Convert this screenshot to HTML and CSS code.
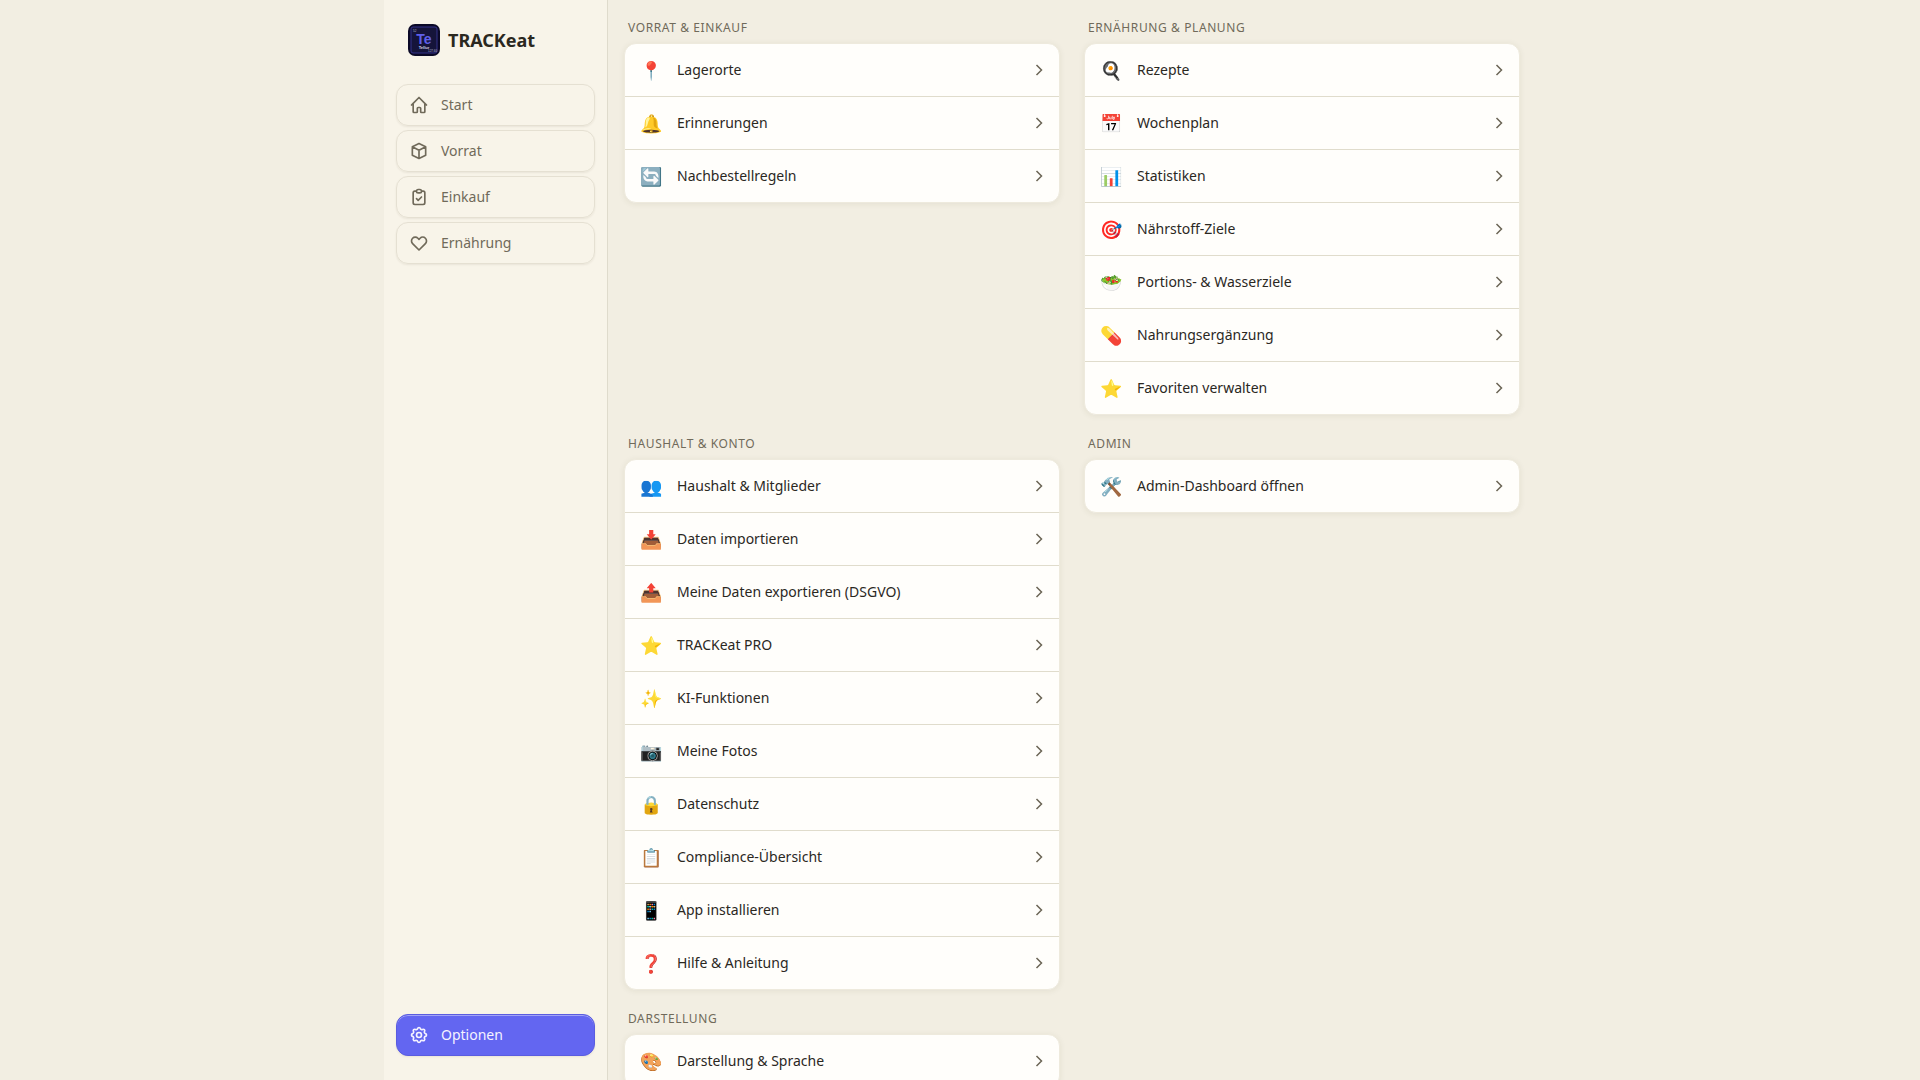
FILE: index.html
```
<!DOCTYPE html>
<html lang="de">
<head>
<meta charset="utf-8">
<meta name="viewport" content="width=device-width, initial-scale=1">
<title>TRACKeat – Optionen</title>
<link rel="stylesheet" href="styles.css">
</head>
<body>
<div class="app">
  <aside class="sidebar">
    <div class="brand">
      <svg class="brand-logo" viewBox="0 0 32 32" aria-hidden="true">
        <rect width="32" height="32" rx="7" fill="#0b0927"/>
        <rect x="3" y="3" width="26" height="26" rx="2" fill="#15143a" stroke="#35338a"/>
        <text x="5" y="8" class="logo-tiny">52</text>
        <text x="16" y="20" class="logo-symbol">Te</text>
        <text x="16" y="25" class="logo-name">Tellur</text>
        <text x="20" y="28" class="logo-tiny">127.60</text>
      </svg>
      <span class="brand-name">TRACKeat</span>
    </div>
    <nav class="nav" aria-label="Hauptnavigation">
      <a class="nav-item" href="#start"><svg class="nav-icon" viewBox="0 0 24 24"><path d="m3 12 2-2m0 0 7-7 7 7M5 10v10a1 1 0 0 0 1 1h3m10-11 2 2m-2-2v10a1 1 0 0 1-1 1h-3m-6 0a1 1 0 0 0 1-1v-4a1 1 0 0 1 1-1h2a1 1 0 0 1 1 1v4a1 1 0 0 0 1 1"/></svg>Start</a>
      <a class="nav-item" href="#vorrat"><svg class="nav-icon" viewBox="0 0 24 24"><path d="m20 7-8-4-8 4m16 0-8 4m8-4v10l-8 4m0-10L4 7m8 4v10M4 7v10l8 4"/></svg>Vorrat</a>
      <a class="nav-item" href="#einkauf"><svg class="nav-icon" viewBox="0 0 24 24"><path d="M9 5H7a2 2 0 0 0-2 2v12a2 2 0 0 0 2 2h10a2 2 0 0 0 2-2V7a2 2 0 0 0-2-2h-2M9 5a2 2 0 0 0 2 2h2a2 2 0 0 0 2-2M9 5a2 2 0 0 1 2-2h2a2 2 0 0 1 2 2m-6 9 2 2 4-4"/></svg>Einkauf</a>
      <a class="nav-item" href="#ernaehrung"><svg class="nav-icon" viewBox="0 0 24 24"><path d="M4.318 6.318a4.5 4.5 0 0 0 0 6.364L12 20.364l7.682-7.682a4.5 4.5 0 0 0-6.364-6.364L12 7.636l-1.318-1.318a4.5 4.5 0 0 0-6.364 0Z"/></svg>Ernährung</a>
      <a class="nav-item nav-item-active" href="#optionen" aria-current="page"><svg class="nav-icon" viewBox="0 0 24 24"><path d="M10.325 4.317c.426-1.756 2.924-1.756 3.35 0a1.724 1.724 0 0 0 2.573 1.066c1.543-.94 3.31.826 2.37 2.37a1.724 1.724 0 0 0 1.065 2.572c1.756.426 1.756 2.924 0 3.35a1.724 1.724 0 0 0-1.066 2.573c.94 1.543-.826 3.31-2.37 2.37a1.724 1.724 0 0 0-2.572 1.065c-.426 1.756-2.924 1.756-3.35 0a1.724 1.724 0 0 0-2.573-1.066c-1.543.94-3.31-.826-2.37-2.37a1.724 1.724 0 0 0-1.065-2.572c-1.756-.426-1.756-2.924 0-3.35a1.724 1.724 0 0 0 1.066-2.573c-.94-1.543.826-3.31 2.37-2.37.996.608 2.296.07 2.572-1.065Z"/><circle cx="12" cy="12" r="3"/></svg>Optionen</a>
    </nav>
  </aside>

  <main class="content">
    <section class="group">
      <h2 class="group-title">Vorrat &amp; Einkauf</h2>
      <div class="card">
        <button type="button" class="row"><span class="emoji">📍</span><span class="label">Lagerorte</span><svg class="chevron" viewBox="0 0 8 12"><path d="m1.5 1 5 5-5 5"/></svg></button>
        <button type="button" class="row"><span class="emoji">🔔</span><span class="label">Erinnerungen</span><svg class="chevron" viewBox="0 0 8 12"><path d="m1.5 1 5 5-5 5"/></svg></button>
        <button type="button" class="row"><span class="emoji">🔄</span><span class="label">Nachbestellregeln</span><svg class="chevron" viewBox="0 0 8 12"><path d="m1.5 1 5 5-5 5"/></svg></button>
      </div>
    </section>

    <section class="group">
      <h2 class="group-title">Ernährung &amp; Planung</h2>
      <div class="card">
        <button type="button" class="row"><span class="emoji">🍳</span><span class="label">Rezepte</span><svg class="chevron" viewBox="0 0 8 12"><path d="m1.5 1 5 5-5 5"/></svg></button>
        <button type="button" class="row"><span class="emoji">📅</span><span class="label">Wochenplan</span><svg class="chevron" viewBox="0 0 8 12"><path d="m1.5 1 5 5-5 5"/></svg></button>
        <button type="button" class="row"><span class="emoji">📊</span><span class="label">Statistiken</span><svg class="chevron" viewBox="0 0 8 12"><path d="m1.5 1 5 5-5 5"/></svg></button>
        <button type="button" class="row"><span class="emoji">🎯</span><span class="label">Nährstoff-Ziele</span><svg class="chevron" viewBox="0 0 8 12"><path d="m1.5 1 5 5-5 5"/></svg></button>
        <button type="button" class="row"><span class="emoji">🥗</span><span class="label">Portions- &amp; Wasserziele</span><svg class="chevron" viewBox="0 0 8 12"><path d="m1.5 1 5 5-5 5"/></svg></button>
        <button type="button" class="row"><span class="emoji">💊</span><span class="label">Nahrungsergänzung</span><svg class="chevron" viewBox="0 0 8 12"><path d="m1.5 1 5 5-5 5"/></svg></button>
        <button type="button" class="row"><span class="emoji">⭐</span><span class="label">Favoriten verwalten</span><svg class="chevron" viewBox="0 0 8 12"><path d="m1.5 1 5 5-5 5"/></svg></button>
      </div>
    </section>

    <section class="group">
      <h2 class="group-title">Haushalt &amp; Konto</h2>
      <div class="card">
        <button type="button" class="row"><span class="emoji">👥</span><span class="label">Haushalt &amp; Mitglieder</span><svg class="chevron" viewBox="0 0 8 12"><path d="m1.5 1 5 5-5 5"/></svg></button>
        <button type="button" class="row"><span class="emoji">📥</span><span class="label">Daten importieren</span><svg class="chevron" viewBox="0 0 8 12"><path d="m1.5 1 5 5-5 5"/></svg></button>
        <button type="button" class="row"><span class="emoji">📤</span><span class="label">Meine Daten exportieren (DSGVO)</span><svg class="chevron" viewBox="0 0 8 12"><path d="m1.5 1 5 5-5 5"/></svg></button>
        <button type="button" class="row"><span class="emoji">⭐</span><span class="label">TRACKeat PRO</span><svg class="chevron" viewBox="0 0 8 12"><path d="m1.5 1 5 5-5 5"/></svg></button>
        <button type="button" class="row"><span class="emoji">✨</span><span class="label">KI-Funktionen</span><svg class="chevron" viewBox="0 0 8 12"><path d="m1.5 1 5 5-5 5"/></svg></button>
        <button type="button" class="row"><span class="emoji">📷</span><span class="label">Meine Fotos</span><svg class="chevron" viewBox="0 0 8 12"><path d="m1.5 1 5 5-5 5"/></svg></button>
        <button type="button" class="row"><span class="emoji">🔒</span><span class="label">Datenschutz</span><svg class="chevron" viewBox="0 0 8 12"><path d="m1.5 1 5 5-5 5"/></svg></button>
        <button type="button" class="row"><span class="emoji">📋</span><span class="label">Compliance-Übersicht</span><svg class="chevron" viewBox="0 0 8 12"><path d="m1.5 1 5 5-5 5"/></svg></button>
        <button type="button" class="row"><span class="emoji">📱</span><span class="label">App installieren</span><svg class="chevron" viewBox="0 0 8 12"><path d="m1.5 1 5 5-5 5"/></svg></button>
        <button type="button" class="row"><span class="emoji">❓</span><span class="label">Hilfe &amp; Anleitung</span><svg class="chevron" viewBox="0 0 8 12"><path d="m1.5 1 5 5-5 5"/></svg></button>
      </div>
    </section>

    <section class="group">
      <h2 class="group-title">Admin</h2>
      <div class="card">
        <button type="button" class="row"><span class="emoji">🛠️</span><span class="label">Admin-Dashboard öffnen</span><svg class="chevron" viewBox="0 0 8 12"><path d="m1.5 1 5 5-5 5"/></svg></button>
      </div>
    </section>

    <section class="group">
      <h2 class="group-title">Darstellung</h2>
      <div class="card">
        <button type="button" class="row"><span class="emoji">🎨</span><span class="label">Darstellung &amp; Sprache</span><svg class="chevron" viewBox="0 0 8 12"><path d="m1.5 1 5 5-5 5"/></svg></button>
      </div>
    </section>
  </main>
</div>
</body>
</html>
```
FILE: styles.css
```
* {
  box-sizing: border-box;
}

body {
  margin: 0;
  background: #f2eee2;
  color: #2b281f;
  font-family: "Noto Sans", sans-serif;
  font-size: 14px;
  line-height: 20px;
}

.app {
  display: flex;
  max-width: 1152px;
  height: 100vh;
  margin: 0 auto;
}

.sidebar {
  display: flex;
  flex-direction: column;
  flex: 0 0 224px;
  gap: 28px;
  padding: 24px 12px;
  background: #f8f4e9;
  border-right: 1px solid #dfdbcc;
}

.brand {
  display: flex;
  align-items: center;
  gap: 8px;
  padding: 0 12px;
}

.brand-logo {
  width: 32px;
  height: 32px;
}

.logo-symbol {
  fill: #5f60ea;
  font: bold 14px "Liberation Sans", sans-serif;
  text-anchor: middle;
}

.logo-name {
  fill: #d5d5e6;
  font: bold 4px "Liberation Sans", sans-serif;
  text-anchor: middle;
}

.logo-tiny {
  fill: #b4b4cc;
  font: 3px "Liberation Sans", sans-serif;
}

.brand-name {
  font-size: 18px;
  font-weight: 700;
  line-height: 28px;
}

.nav {
  display: flex;
  flex: 1;
  flex-direction: column;
  gap: 4px;
}

.nav-item {
  display: flex;
  align-items: center;
  gap: 12px;
  padding: 10px 12px;
  border: 1px solid #e5e0d2;
  border-radius: 12px;
  box-shadow: 0 1px 2px rgb(60 50 20 / 8%);
  color: #706a5a;
  text-decoration: none;
}

.nav-item-active {
  margin-top: auto;
  background: #6366f1;
  border-color: #5a5ce0;
  box-shadow: inset 0 1px 0 rgb(255 255 255 / 40%), 0 1px 2px rgb(60 50 20 / 8%);
  color: #f5f3ff;
}

.nav-icon {
  width: 20px;
  height: 20px;
  fill: none;
  stroke: currentColor;
  stroke-width: 2;
  stroke-linecap: round;
  stroke-linejoin: round;
}

.content {
  display: grid;
  flex: 1;
  grid-template-columns: repeat(2, minmax(0, 1fr));
  align-content: start;
  gap: 20px 24px;
  padding: 19px 16px;
  overflow: hidden;
}

.group-title {
  margin: 0 0 6px;
  padding: 0 4px;
  color: #706a5a;
  font-size: 12px;
  font-weight: 400;
  letter-spacing: 0.6px;
  line-height: 18px;
  text-transform: uppercase;
}

.card {
  overflow: hidden;
  background: #fffefb;
  border: 1px solid #eeeadd;
  border-radius: 12px;
  box-shadow: 0 1px 6px rgb(60 60 20 / 8%);
}

.row {
  display: flex;
  align-items: center;
  gap: 16px;
  width: 100%;
  padding: 16px;
  background: none;
  border: 0;
  color: inherit;
  font: inherit;
  text-align: left;
}

.row + .row {
  border-top: 1px solid #e0dccc;
}

.emoji {
  display: flex;
  justify-content: center;
  width: 20px;
  font-size: 18px;
}

.label {
  flex: 1;
}

.chevron {
  width: 8px;
  height: 12px;
  fill: none;
  stroke: #6b6555;
  stroke-width: 1.5;
}
```
